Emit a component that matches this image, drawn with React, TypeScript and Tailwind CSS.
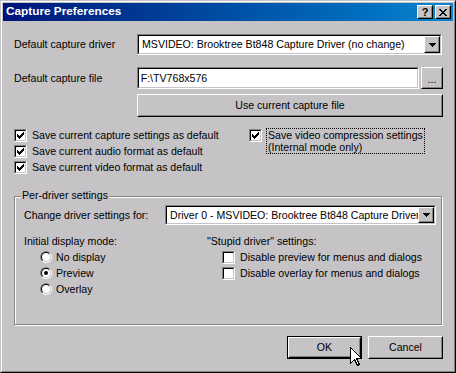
import React from "react";

const BG = "bg-[#c6c3c6]";

function Raised({
  className = "",
  children,
}: {
  className?: string;
  children?: React.ReactNode;
}) {
  return (
    <div
      className={`border border-t-white border-l-white border-r-black border-b-black ${BG} ${className}`}
    >
      <div className="w-full h-full border border-t-[#c6c3c6] border-l-[#c6c3c6] border-r-[#848284] border-b-[#848284] flex items-center justify-center">
        {children}
      </div>
    </div>
  );
}

function Sunken({
  className = "",
  innerClass = "",
  children,
}: {
  className?: string;
  innerClass?: string;
  children?: React.ReactNode;
}) {
  return (
    <div
      className={`border border-t-[#848284] border-l-[#848284] border-r-white border-b-white ${className}`}
    >
      <div
        className={`w-full h-full border border-t-black border-l-black border-r-[#c6c3c6] border-b-[#c6c3c6] ${innerClass}`}
      >
        {children}
      </div>
    </div>
  );
}

function Arrow() {
  return (
    <svg width="7" height="4" viewBox="0 0 7 4" shapeRendering="crispEdges">
      <rect x="0" y="0" width="7" height="1" fill="#000" />
      <rect x="1" y="1" width="5" height="1" fill="#000" />
      <rect x="2" y="2" width="3" height="1" fill="#000" />
      <rect x="3" y="3" width="1" height="1" fill="#000" />
    </svg>
  );
}

function Combo({
  text,
  className = "",
}: {
  text: string;
  className?: string;
}) {
  return (
    <Sunken className={className} innerClass="bg-white flex items-stretch">
      <div className="flex-1 overflow-hidden whitespace-nowrap pl-[3px] flex items-center">
        {text}
      </div>
      <Raised className="w-[16px] shrink-0">
        <Arrow />
      </Raised>
    </Sunken>
  );
}

function Check() {
  const cols = [2, 3, 4, 3, 2, 1, 0];
  return (
    <svg width="7" height="7" viewBox="0 0 7 7" shapeRendering="crispEdges">
      {cols.map((y, x) => (
        <rect key={x} x={x} y={y} width="1" height="3" fill="#000" />
      ))}
    </svg>
  );
}

function CheckBox({ checked }: { checked?: boolean }) {
  return (
    <Sunken
      className="w-[13px] h-[13px] shrink-0"
      innerClass="bg-white flex items-center justify-center"
    >
      {checked && <Check />}
    </Sunken>
  );
}

function Radio({ checked }: { checked?: boolean }) {
  return (
    <div className="w-[12px] h-[12px] shrink-0 rounded-full border border-t-[#848284] border-l-[#848284] border-r-white border-b-white">
      <div className="w-full h-full rounded-full border border-t-black border-l-black border-r-[#c6c3c6] border-b-[#c6c3c6] bg-white flex items-center justify-center">
        {checked && <div className="w-[4px] h-[4px] rounded-full bg-black" />}
      </div>
    </div>
  );
}

function CloseGlyph() {
  const rows = [
    [0, 1, 6, 7],
    [1, 2, 5, 6],
    [2, 3, 4, 5],
    [3, 4],
    [2, 3, 4, 5],
    [1, 2, 5, 6],
    [0, 1, 6, 7],
  ];
  return (
    <svg width="8" height="7" viewBox="0 0 8 7" shapeRendering="crispEdges">
      {rows.map((r, y) =>
        r.map((x) => (
          <rect key={`${x}-${y}`} x={x} y={y} width="1" height="1" fill="#000" />
        ))
      )}
    </svg>
  );
}

export default function App() {
  return (
    <div className="w-[456px] h-[373px] relative overflow-hidden font-['Liberation_Sans',Arial,sans-serif] text-black">
      <div
        className={`w-full h-full border border-t-[#c6c3c6] border-l-[#c6c3c6] border-r-black border-b-black ${BG}`}
      >
        <div className="w-full h-full border border-t-white border-l-white border-r-[#848284] border-b-[#848284] p-px flex flex-col">
          {/* Title bar */}
          <div className="h-[18px] shrink-0 flex items-center bg-linear-to-r from-[#00127a] to-[#1084d0] pl-[3px] pr-[2px]">
            <span className="text-white font-bold text-[11.8px] leading-none">
              Capture Preferences
            </span>
            <div className="ml-auto flex gap-[2px]">
              <Raised className="w-[16px] h-[14px]">
                <span className="font-bold text-[11px] leading-none pt-px">?</span>
              </Raised>
              <Raised className="w-[16px] h-[14px]">
                <CloseGlyph />
              </Raised>
            </div>
          </div>

          {/* Client area */}
          <div className="flex-1 flex flex-col pl-[11px] pr-[10px] text-[10.6px] leading-[13px]">
            {/* Driver */}
            <div className="mt-[13px] h-[21px] flex items-center">
              <div className="w-[123px]">Default capture driver</div>
              <Combo
                className="w-[305px] h-[21px]"
                text="MSVIDEO: Brooktree Bt848 Capture Driver (no change)"
              />
            </div>

            {/* File */}
            <div className="mt-[12px] h-[22px] flex items-center">
              <div className="w-[123px]">Default capture file</div>
              <Sunken
                className="w-[283px] h-[22px]"
                innerClass="bg-white flex items-center pl-[2px]"
              >
                F:\TV768x576
              </Sunken>
              <Raised className="ml-[2px] w-[22px] h-[22px]">
                <span className="leading-none pt-[3px]">...</span>
              </Raised>
            </div>

            {/* Use current */}
            <div className="mt-[5px] flex">
              <Raised className="ml-[123px] w-[306px] h-[23px]">
                Use current capture file
              </Raised>
            </div>

            {/* Checkboxes */}
            <div className="mt-[10px] flex">
              <div className="w-[235px] flex flex-col">
                {[
                  "Save current capture settings as default",
                  "Save current audio format as default",
                  "Save current video format as default",
                ].map((t) => (
                  <div key={t} className="h-[16px] flex items-center">
                    <CheckBox checked />
                    <span className="ml-[5px]">{t}</span>
                  </div>
                ))}
              </div>
              <div className="flex items-start">
                <div className="h-[16px] flex items-center">
                  <CheckBox checked />
                </div>
                <div className="ml-[4px] mt-px border border-dotted border-black px-px leading-[12px]">
                  Save video compression settings
                  <br />
                  (Internal mode only)
                </div>
              </div>
            </div>

            {/* Group box */}
            <div className="mt-[21px] relative w-[428px] h-[129px] border border-[#848284] shadow-[1px_1px_0_#fff,inset_1px_1px_0_#fff] pl-[9px] flex flex-col">
              <div className={`absolute left-[6px] top-[-8px] px-[1px] ${BG}`}>
                Per-driver settings
              </div>
              <div className="mt-[8px] h-[20px] flex items-center">
                <div className="w-[141px]">Change driver settings for:</div>
                <Combo
                  className="w-[271px] h-[20px]"
                  text="Driver 0 - MSVIDEO: Brooktree Bt848 Capture Driver"
                />
              </div>
              <div className="mt-[9px] flex">
                <div className="w-[183px] flex flex-col">
                  <div className="h-[15px] flex items-center">
                    Initial display mode:
                  </div>
                  {[
                    ["No display", false],
                    ["Preview", true],
                    ["Overlay", false],
                  ].map(([t, c]) => (
                    <div
                      key={t as string}
                      className="h-[16px] flex items-center pl-[16px]"
                    >
                      <Radio checked={c as boolean} />
                      <span className="ml-[4px]">{t as string}</span>
                    </div>
                  ))}
                </div>
                <div className="flex flex-col">
                  <div className="h-[15px] flex items-center">
                    "Stupid driver" settings:
                  </div>
                  {[
                    "Disable preview for menus and dialogs",
                    "Disable overlay for menus and dialogs",
                  ].map((t) => (
                    <div
                      key={t}
                      className="h-[16px] flex items-center pl-[15px]"
                    >
                      <CheckBox />
                      <span className="ml-[5px]">{t}</span>
                    </div>
                  ))}
                </div>
              </div>
            </div>

            {/* Buttons */}
            <div className="mt-[11px] flex justify-end gap-[6px]">
              <div className="border border-black">
                <Raised className="w-[73px] h-[21px]">OK</Raised>
              </div>
              <Raised className="w-[75px] h-[23px]">Cancel</Raised>
            </div>
          </div>
        </div>
      </div>

      {/* Mouse cursor */}
      <svg
        className="absolute left-[350px] top-[347px]"
        width="13"
        height="20"
        viewBox="0 0 13 20"
        shapeRendering="crispEdges"
      >
        <path
          d="M0.5 0.5 L0.5 16.5 L4.5 12.5 L7.5 18.5 L9.5 17.5 L6.5 11.5 L11.5 11.5 Z"
          fill="#fff"
          stroke="#000"
          strokeWidth="1"
        />
      </svg>
    </div>
  );
}
